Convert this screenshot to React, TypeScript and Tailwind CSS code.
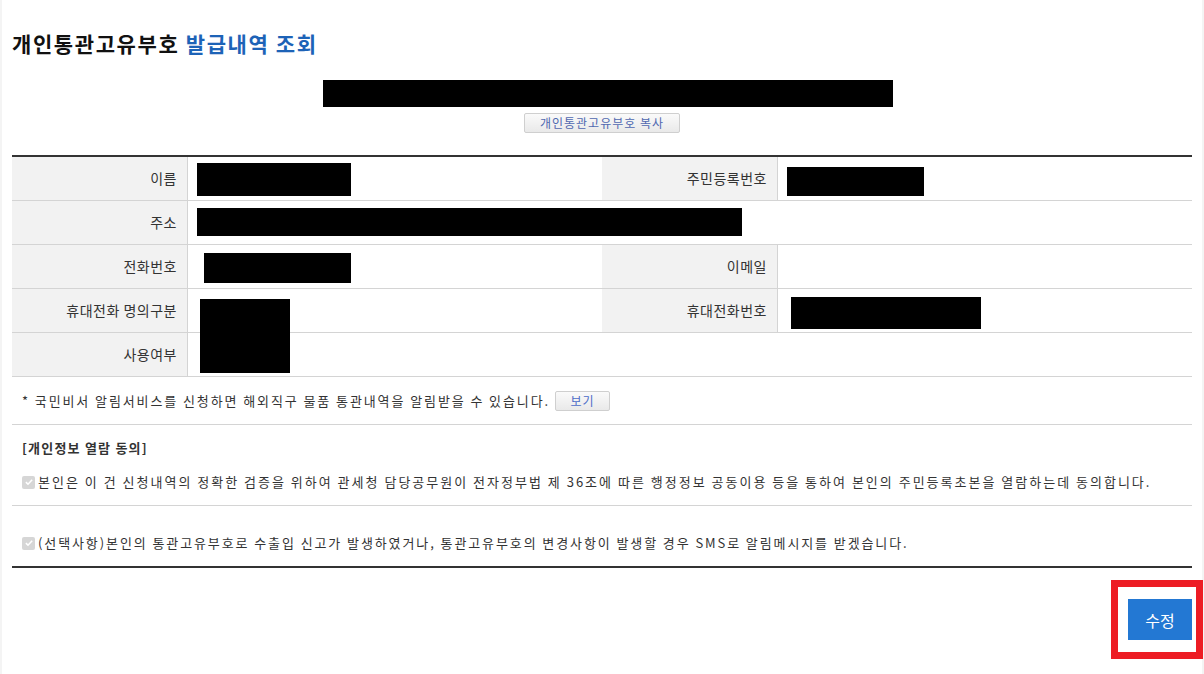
import React from "react";

const font = { fontFamily: '"Noto Sans CJK KR", "Noto Sans", sans-serif' };

const Redact = ({ className }: { className: string }) => (
    <div className={`bg-black ${className}`} />
);

const Check = () => (
    <span className="mr-[3px] inline-flex h-[13px] w-[13px] shrink-0 items-center justify-center rounded-[2px] bg-[#d6d6d6]">
        <svg viewBox="0 0 12 12" className="h-[10px] w-[10px]">
            <path d="M2.2 6.2 L4.8 8.6 L9.8 3.2" fill="none" stroke="#ffffff" strokeWidth="1.8" />
        </svg>
    </span>
);

const Label = ({ children }: { children: React.ReactNode }) => (
    <div className="flex w-[176px] shrink-0 items-center justify-end border-r border-[#d4d4d4] bg-[#f2f2f2] pr-[10px] text-[14px] tracking-[0.5px] text-[#333]">
        {children}
    </div>
);

const Row = ({ children }: { children: React.ReactNode }) => (
    <div className="flex h-[44px] border-b border-[#d4d4d4]">{children}</div>
);

export default function App() {
    return (
        <div className="min-h-[674px] bg-[#f4f4f4] px-[2px]" style={font}>
            <div className="min-h-[674px] bg-white px-[10px] pt-[28px]">
                <h1 className="text-[21px] font-bold leading-[30px] tracking-[1.6px] text-[#111]">
                    개인통관고유부호 <span className="text-[#1d63b7]">발급내역 조회</span>
                </h1>

                <div className="mt-[22px] flex flex-col">
                    <Redact className="ml-[311px] h-[27px] w-[570px]" />
                    <div className="mt-[6px] flex justify-center">
                        <button
                            type="button"
                            className="h-[20px] w-[156px] rounded-[2px] border border-[#cfcfcf] bg-gradient-to-b from-[#fafafa] to-[#e9e9e9] text-[12px] leading-none tracking-[1px] text-[#5068b0]"
                        >
                            개인통관고유부호 복사
                        </button>
                    </div>
                </div>

                <div className="mt-[22px] border-t-2 border-[#333]">
                    <Row>
                        <Label>이름</Label>
                        <div className="flex w-[414px] items-start pl-[9px] pt-[6px]">
                            <Redact className="h-[33px] w-[154px]" />
                        </div>
                        <Label>주민등록번호</Label>
                        <div className="flex flex-1 items-start pl-[9px] pt-[10px]">
                            <Redact className="h-[29px] w-[137px]" />
                        </div>
                    </Row>
                    <Row>
                        <Label>주소</Label>
                        <div className="flex flex-1 items-start pl-[9px] pt-[7px]">
                            <Redact className="h-[28px] w-[545px]" />
                        </div>
                    </Row>
                    <Row>
                        <Label>전화번호</Label>
                        <div className="flex w-[414px] items-start pl-[16px] pt-[8px]">
                            <Redact className="h-[30px] w-[147px]" />
                        </div>
                        <Label>이메일</Label>
                        <div className="flex-1" />
                    </Row>
                    <Row>
                        <Label>휴대전화 명의구분</Label>
                        <div className="relative flex w-[414px]">
                            <Redact className="absolute left-[12px] top-[10px] z-10 h-[74px] w-[90px]" />
                        </div>
                        <Label>휴대전화번호</Label>
                        <div className="flex flex-1 items-start pl-[13px] pt-[8px]">
                            <Redact className="h-[32px] w-[190px]" />
                        </div>
                    </Row>
                    <Row>
                        <Label>사용여부</Label>
                        <div className="flex-1" />
                    </Row>

                    <div className="flex h-[48px] items-center border-b border-[#d4d4d4] pl-[10px] text-[13px] text-[#333]">
                        <span className="tracking-[1.9px]">* 국민비서 알림서비스를 신청하면 해외직구 물품 통관내역을 알림받을 수 있습니다.</span>
                        <button
                            type="button"
                            className="ml-[5px] h-[20px] w-[55px] rounded-[2px] border border-[#cfcfcf] bg-gradient-to-b from-[#fafafa] to-[#e9e9e9] text-[12px] leading-none tracking-[1px] text-[#4c6cc8]"
                        >
                            보기
                        </button>
                    </div>

                    <div className="border-b border-[#d4d4d4] pl-[10px] text-[13px] text-[#333]">
                        <p className="pt-[12px] font-bold leading-[22px] tracking-[1.2px]">[개인정보 열람 동의]</p>
                        <p className="mt-[12px] flex h-[22px] items-center tracking-[2px]">
                            <Check />
                            본인은 이 건 신청내역의 정확한 검증을 위하여 관세청 담당공무원이 전자정부법 제 36조에 따른 행정정보 공동이용 등을 통하여 본인의 주민등록초본을 열람하는데 동의합니다.
                        </p>
                        <div className="h-[12px]" />
                    </div>

                    <div className="flex h-[62px] items-end border-b-2 border-[#333] pb-[12px] pl-[10px] text-[13px] tracking-[1.9px] text-[#333]">
                        <p className="flex h-[22px] items-center">
                            <Check />
                            (선택사항)본인의 통관고유부호로 수출입 신고가 발생하였거나, 통관고유부호의 변경사항이 발생할 경우 SMS로 알림메시지를 받겠습니다.
                        </p>
                    </div>
                </div>

                <div className="mt-[31px] flex justify-end">
                    <div className="relative">
                        <button
                            type="button"
                            className="h-[41px] w-[64px] bg-[#2378d3] text-[16px] text-white"
                        >
                            수정
                        </button>
                        <div className="absolute -bottom-[19px] -left-[17px] -right-[11px] -top-[19px] border-[7px] border-[#ed1c24]" />
                    </div>
                </div>
            </div>
        </div>
    );
}
